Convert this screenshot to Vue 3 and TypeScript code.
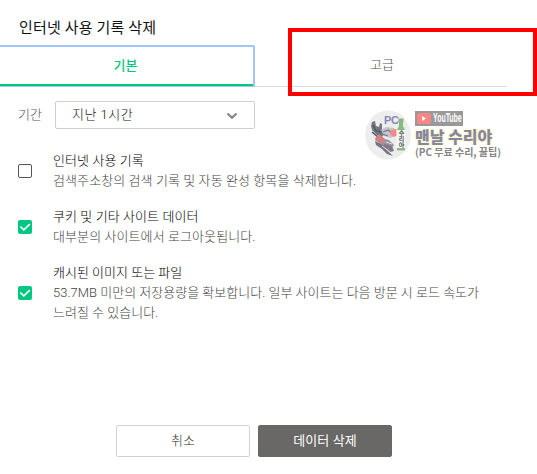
<script setup lang="ts">
import { ref } from 'vue'

interface DataOption {
  id: string
  title: string
  lines: string[]
  checked: boolean
}

const options = ref<DataOption[]>([
  { id: 'history', title: '인터넷 사용 기록', lines: ['검색주소창의 검색 기록 및 자동 완성 항목을 삭제합니다.'], checked: false },
  { id: 'cookies', title: '쿠키 및 기타 사이트 데이터', lines: ['대부분의 사이트에서 로그아웃됩니다.'], checked: true },
  {
    id: 'cache',
    title: '캐시된 이미지 또는 파일',
    lines: ['53.7MB 미만의 저장용량을 확보합니다. 일부 사이트는 다음 방문 시 로드 속도가', '느려질 수 있습니다.'],
    checked: true,
  },
])
</script>

<template>
  <main class="dialog">
    <h1 class="title">인터넷 사용 기록 삭제</h1>
    <nav class="tabs">
      <button class="tab active">기본</button>
      <button class="tab">고급</button>
    </nav>
    <div class="period">
      <span class="period-label">기간</span>
      <button class="select">
        <span>지난 1시간</span>
        <svg class="chevron" width="12" height="8" viewBox="0 0 12 8"><path d="M1.500 1.500 6 5.800l4.500-4.300" fill="none" stroke="#858585" stroke-width="2.200" /></svg>
      </button>
    </div>
    <ul class="options">
      <li v-for="o in options" :key="o.id" class="option" :class="o.id" @click="o.checked = !o.checked">
        <span class="box" :class="{ checked: o.checked }">
          <svg v-if="o.checked" width="14" height="14" viewBox="0 0 14 14"><path d="m2.300 6.500 3.500 3.400 6-5.800" fill="none" stroke="#fff" stroke-width="1.600" /></svg>
        </span>
        <div class="copy">
          <div class="name">{{ o.title }}</div>
          <div v-for="l in o.lines" :key="l" class="desc">{{ l }}</div>
        </div>
      </li>
    </ul>
    <footer class="actions">
      <button class="btn">취소</button>
      <button class="btn primary">데이터 삭제</button>
    </footer>

    <div class="highlight"></div>

    <aside class="mark">
      <div class="avatar">
        <svg width="46" height="50" viewBox="0 0 46 50">
          <ellipse cx="23" cy="25" rx="22.800" ry="24.500" fill="#ededed" />
          <path d="m6 16 1-4 3-1 1 5 3 1 1-4 2 1v6l3 3-3 4-5-2-5-5z" fill="#77777f" />
          <path d="m8 15 3 6 6 1M7 22l6 5 5 1" fill="none" stroke="#555767" stroke-width="1.600" />
          <path d="m16 20 5-3 8 1 2 6-5 4-7-2z" fill="#c5c5d2" />
          <path d="m18 22 5-2 4 3M17 24l6 2" fill="none" stroke="#777486" stroke-width="1.300" />
          <path d="m12 27 12 3 5 5-3 4-9-4-7-5z" fill="#9695a3" />
          <path d="m26 20 5-1 2 4-1 3-4 1-3-3z" fill="#ef8d8d" />
          <path d="m11 27 4-2 5 4-1 4-5-1-4-3z" fill="#d97f83" />
          <path d="m10 31 8 4 4 5 6 6-6-2-5-5-6-4z" fill="#77727b" />
          <path d="m20 34 7 2 2 5-4 1-7-6z" fill="#847984" />
          <path d="m21 32 6 2M17 36l8 6" fill="none" stroke="#dedee4" />
          <path d="M34 12h4v4l2 4H32l2-4z" fill="#82bd7e" />
          <rect x="33.500" y="8.500" width="5" height="3.500" fill="#9bad7e" />
          <rect x="32" y="38" width="8" height="2.500" fill="#8bbb86" />
          <rect x="31.500" y="20" width="8.500" height="18" fill="#fafafa" />
        </svg>
        <span class="pc">PC</span>
        <span class="label">수리야</span>
      </div>
      <div class="mark-copy">
        <div class="tube">
          <svg width="14" height="11" viewBox="0 0 14 11"><rect width="14" height="11" rx="2.500" fill="#ff8585" /><path d="M5 3v5l4-2.500z" fill="#fff" /></svg>
          <span>YouTube</span>
        </div>
        <div class="channel">맨날 수리야</div>
        <div class="tagline">(PC 무료 수리, 꿀팁)</div>
      </div>
    </aside>
  </main>
</template>

<style>
body {
  background: #fff;
}
</style>

<style scoped>
* {
  box-sizing: border-box;
}
.dialog {
  position: relative;
  display: flex;
  flex-direction: column;
  width: 537px;
  height: 474px;
  overflow: hidden;
  font-family: Roboto, "Noto Sans CJK KR", sans-serif;
  font-size: 13px;
  font-weight: 300;
  letter-spacing: 0.09px;
  white-space: nowrap;
}
button {
  font: inherit;
  letter-spacing: inherit;
  padding: 0;
  background: none;
}
.title {
  margin: 0;
  padding: 18px 0 0 19px;
  height: 45px;
  font-size: 15px;
  line-height: 20px;
  font-weight: 400;
  letter-spacing: 0.15px;
  color: #111;
}
.tabs {
  display: flex;
  width: 507px;
  height: 42px;
  border-bottom: 1px solid #ddd;
}
.tab {
  width: 252px;
  height: 42px;
  padding: 0 0 5px 2px;
  border: 0;
  color: #555;
}
.tab.active {
  width: 255px;
  padding: 0 2px 5px 0;
  border: 2px solid #a4c4fa;
  border-left: 0;
  border-bottom: 1px solid #a4c4fa;
  border-radius: 0 2px 0 0;
  box-shadow: inset 0 -2px #03c77d;
  color: #03c77d;
  font-weight: 500;
}
.period {
  display: flex;
  align-items: center;
  margin-top: 14px;
  padding-left: 18px;
  height: 28px;
  color: #555;
}
.period-label {
  width: 37px;
  padding-bottom: 4px;
}
.select {
  display: flex;
  align-items: center;
  justify-content: space-between;
  width: 200px;
  height: 28px;
  padding: 0 16px 4px 16px;
  border: 1px solid #cfcfcf;
  border-radius: 2px;
  letter-spacing: 0.5px;
  color: #111;
}
.chevron {
  margin-top: 6px;
}
.options {
  margin: 22px 0 0;
  padding: 0 0 0 18px;
  list-style: none;
}
.option {
  display: flex;
  align-items: center;
  height: 40px;
  margin-bottom: 16px;
}
.option.cache {
  height: 60px;
  letter-spacing: 0.01px;
}
.box {
  display: flex;
  width: 14px;
  height: 14px;
  margin-right: 21px;
  border: 1px solid #555;
  border-radius: 2px;
}
.box.checked {
  border: 0;
  background: #03c781;
}
.name,
.desc {
  height: 20px;
  line-height: 20px;
}
.name {
  color: #000;
}
.desc {
  color: #444;
}
.actions {
  display: flex;
  gap: 8px;
  margin-top: auto;
  padding: 0 0 17px 116px;
}
.btn {
  width: 134px;
  height: 32px;
  padding-bottom: 4px;
  border: 1px solid #d2d2d2;
  border-radius: 2px;
  color: #333;
}
.btn.primary {
  border-color: #696866;
  background: #696866;
  color: #fff;
  font-weight: 400;
}
.highlight {
  position: absolute;
  left: 288px;
  top: 28px;
  width: 249px;
  height: 68px;
  border: 4px solid #f00;
}
.mark {
  position: absolute;
  left: 365px;
  top: 110px;
  display: flex;
  gap: 4px;
  letter-spacing: 0;
}
.avatar {
  position: relative;
  width: 46px;
  height: 50px;
}
.pc {
  position: absolute;
  left: 19px;
  top: 5px;
  font: 700 11px/11px "Liberation Sans", sans-serif;
  letter-spacing: -0.3px;
  color: #8788b5;
}
.label {
  position: absolute;
  left: 32px;
  top: 20px;
  writing-mode: vertical-rl;
  font: 700 6px/8px "Noto Sans CJK KR", sans-serif;
  color: #555;
}
.mark-copy {
  padding-top: 1px;
}
.tube {
  display: flex;
  align-items: center;
  gap: 2px;
  width: 48px;
  height: 15px;
  padding-left: 2px;
  background: #999;
  color: #fff;
  font: 700 12px/15px "Liberation Sans", sans-serif;
}
.tube svg {
  flex: none;
}
.tube span {
  flex: none;
  transform: scaleX(0.580);
  transform-origin: left;
}
.channel {
  margin-top: 1px;
  height: 18px;
  line-height: 18px;
  font-family: "Noto Sans CJK KR", sans-serif;
  font-size: 16px;
  font-weight: 900;
  color: #8586a5;
  text-shadow: 0 0 2px #fff3a8, 0 0 3px #fff3a8;
}
.tagline {
  height: 14px;
  line-height: 14px;
  font-family: "Noto Sans CJK KR", sans-serif;
  font-size: 10px;
  font-weight: 700;
  color: #858585;
}
</style>
